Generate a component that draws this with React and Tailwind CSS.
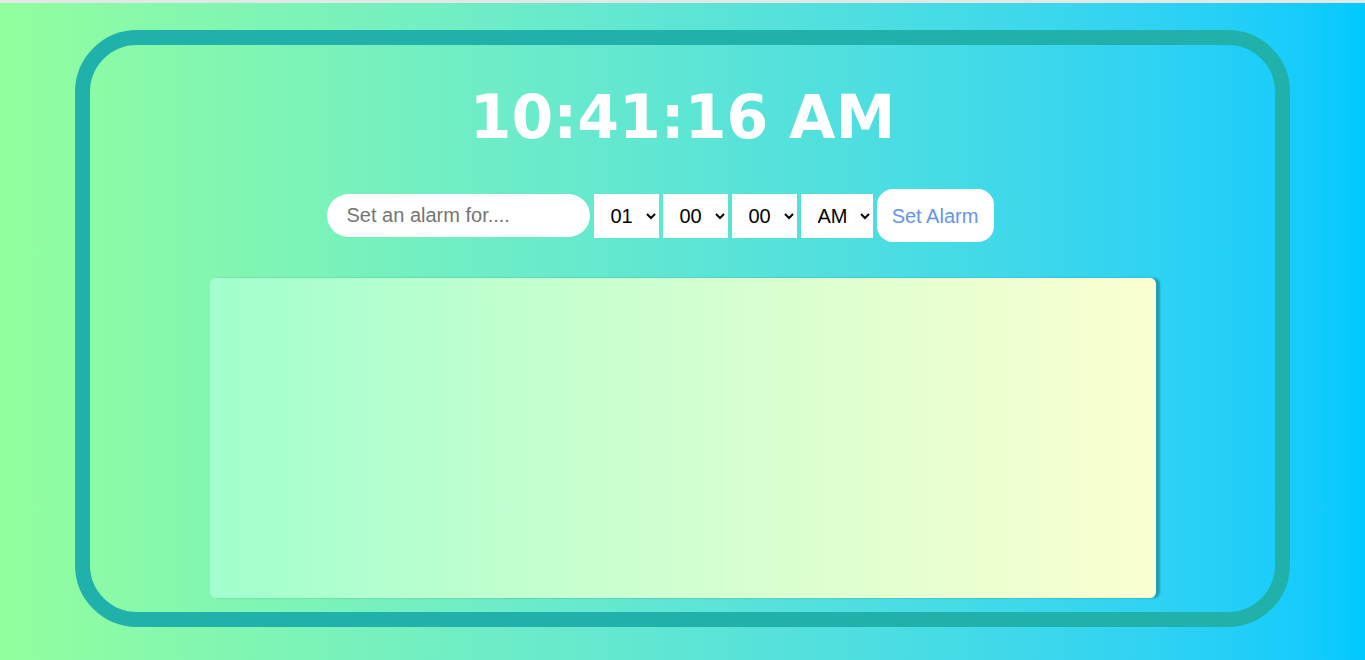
import { useState } from 'react';

export default function App() {
  const [hour, setHour] = useState('01');
  const [minute, setMinute] = useState('00');
  const [second, setSecond] = useState('00');
  const [ampm, setAmpm] = useState('AM');

  const pad = (n) => String(n).padStart(2, '0');
  const hours = Array.from({ length: 12 }, (_, i) => pad(i + 1));
  const sixty = Array.from({ length: 60 }, (_, i) => pad(i));

  const selectCls =
    'h-[44px] bg-white text-black text-[20px] pl-[13px] pr-[4px] border-0 outline-none appearance-auto';

  return (
    <div className="min-h-[660px] w-full flex flex-col bg-gradient-to-r from-[#92fe9d] to-[#00c9ff]" style={{ fontFamily: '"Liberation Sans", Arial, sans-serif' }}>
      <div className="h-[3px] bg-[#e3e8e6]" />

      {/* Clock frame */}
      <div className="mx-auto mt-[27px] w-[1215px] h-[597px] border-[15px] border-[#20b2aa] rounded-[62px] flex flex-col items-center">
        <h1
          className="mt-[32px] text-white font-bold text-[60px] leading-[80px]"
          style={{ fontFamily: '"DejaVu Sans", sans-serif' }}
        >
          10:41:16 AM
        </h1>

        {/* Alarm controls */}
        <div className="mt-[32px] flex items-center gap-1 pr-[45px]">
          <input
            type="text"
            placeholder="Set an alarm for...."
            className="w-[263px] h-[43px] rounded-full bg-white px-[20px] text-[20px] text-black placeholder:text-[#757575] outline-none"
          />
          <select className={`${selectCls} w-[65px]`} value={hour} onChange={(e) => setHour(e.target.value)}>
            {hours.map((h) => <option key={h}>{h}</option>)}
          </select>
          <select className={`${selectCls} w-[65px]`} value={minute} onChange={(e) => setMinute(e.target.value)}>
            {sixty.map((m) => <option key={m}>{m}</option>)}
          </select>
          <select className={`${selectCls} w-[65px]`} value={second} onChange={(e) => setSecond(e.target.value)}>
            {sixty.map((s) => <option key={s}>{s}</option>)}
          </select>
          <select className={`${selectCls} w-[72px]`} value={ampm} onChange={(e) => setAmpm(e.target.value)}>
            <option>AM</option>
            <option>PM</option>
          </select>
          <button className="w-[117px] h-[53px] rounded-[16px] bg-white text-[#6495ed] text-[20px]">
            Set Alarm
          </button>
        </div>

        {/* Alarm list */}
        <div className="mt-[36px] w-[946px] h-[320px] rounded-[6px] bg-gradient-to-r from-[#a1ffce] to-[#faffd1] shadow-[4px_0_2px_rgba(0,60,60,0.35)]" />
      </div>
    </div>
  );
}
